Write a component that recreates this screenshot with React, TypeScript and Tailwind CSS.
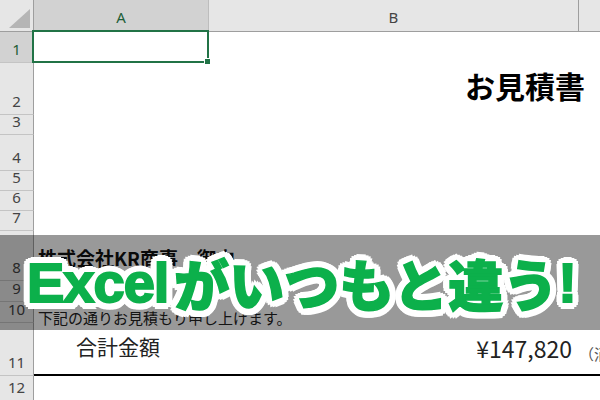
import React from "react";

const rows = [
  { n: 1, h: "h-[31px]" },
  { n: 2, h: "h-[52px]" },
  { n: 3, h: "h-[20px]" },
  { n: 4, h: "h-[36px]" },
  { n: 5, h: "h-[20px]" },
  { n: 6, h: "h-[20px]" },
  { n: 7, h: "h-[20px]" },
  { n: 8, h: "h-[50px]" },
  { n: 9, h: "h-[21px]" },
  { n: 10, h: "h-[21px]" },
  { n: 11, h: "h-[53px]" },
  { n: 12, h: "h-[25px]" },
];

function RowContent({ n }: { n: number }) {
  if (n === 2) {
    return (
      <div className="flex-1 pl-[431px] pt-[7px]">
        <span className="text-[30px] font-bold leading-none text-black whitespace-nowrap">お見積書</span>
      </div>
    );
  }
  if (n === 8) {
    return (
      <div className="flex-1 pl-[4px] pt-[16px]">
        <span className="text-[19px] font-bold leading-none text-[#111] whitespace-nowrap">株式会社KR商事　御中</span>
      </div>
    );
  }
  if (n === 10) {
    return (
      <div className="flex-1 pl-[4px] pt-[3px]">
        <span className="text-[15px] leading-none text-[#222] whitespace-nowrap">下記の通りお見積もり申し上げます。</span>
      </div>
    );
  }
  if (n === 11) {
    return (
      <div className="flex flex-1 border-b-2 border-black pt-[13px]">
        <div className="w-[175px] pl-[42px]">
          <span className="text-[21px] leading-none text-[#222] whitespace-nowrap">合計金額</span>
        </div>
        <div className="flex w-[370px] justify-end pr-[7px] pt-[1px]">
          <span className="text-[23px] leading-none text-[#222] whitespace-nowrap">¥147,820</span>
        </div>
        <div className="flex-1 pt-[5px]">
          <span className="text-[15px] leading-none text-[#555] whitespace-nowrap">（消費税込）</span>
        </div>
      </div>
    );
  }
  return <div className="flex-1" />;
}

export default function App() {
  return (
    <div className="relative h-[400px] w-[600px] overflow-hidden bg-white font-['Noto_Sans_CJK_JP','Noto_Sans',sans-serif]">
      {/* column headers */}
      <div className="flex h-[32px] border-b border-[#9e9e9e] bg-[#e6e6e6] font-['Noto_Sans',sans-serif] text-[15px] text-[#444]">
        <div className="relative w-[34px] border-r border-[#9e9e9e]">
          <svg className="absolute left-[9px] top-[9px]" width="21" height="19" viewBox="0 0 21 19">
            <polygon points="21,0 21,19 0,19" fill="#b5b5b5" />
          </svg>
        </div>
        <div className="flex w-[175px] items-end justify-center border-r border-[#bdbdbd] bg-[#d2d2d2] pb-[6px] leading-none text-[#1e5e38]">
          A
        </div>
        <div className="flex w-[370px] items-end justify-center border-r border-[#9e9e9e] pb-[6px] leading-none">
          B
        </div>
        <div className="flex-1" />
      </div>

      {/* rows */}
      {rows.map((r) => (
        <div key={r.n} className={`flex ${r.h}`}>
          <div
            className={`flex w-[34px] shrink-0 items-end justify-center border-b border-r border-b-[#c4c4c4] border-r-[#9e9e9e] pb-[5px] font-['Noto_Sans',sans-serif] text-[15px] leading-none overflow-hidden ${
              r.n === 1 ? "bg-[#d2d2d2] text-[#1e5e38]" : "bg-[#e6e6e6] text-[#444]"
            }`}
          >
            {r.n}
          </div>
          <RowContent n={r.n} />
        </div>
      ))}

      {/* selection box on A1 */}
      <div className="absolute left-[32px] top-[30px] h-[33px] w-[177px] border-2 border-[#217346]">
        <div className="absolute -bottom-[4px] -right-[4px] h-[7px] w-[7px] border border-white bg-[#217346]" />
      </div>

      {/* title overlay */}
      <div className="absolute left-0 top-[235px] flex h-[95px] w-full items-center pl-[27px] bg-black/40">
        <span className="flex items-center whitespace-nowrap font-['Noto_Sans_CJK_JP',sans-serif] text-[55px] font-black leading-none text-[#0cb04b] [text-shadow:7px_0_0_#fff,6.5px_2.7px_0_#fff,5px_5px_0_#fff,2.7px_6.5px_0_#fff,0_7px_0_#fff,-2.7px_6.5px_0_#fff,-5px_5px_0_#fff,-6.5px_2.7px_0_#fff,-7px_0_0_#fff,-6.5px_-2.7px_0_#fff,-5px_-5px_0_#fff,-2.7px_-6.5px_0_#fff,0_-7px_0_#fff,2.7px_-6.5px_0_#fff,5px_-5px_0_#fff,6.5px_-2.7px_0_#fff,3.5px_0_0_#fff,2.5px_2.5px_0_#fff,0_3.5px_0_#fff,-2.5px_2.5px_0_#fff,-3.5px_0_0_#fff,-2.5px_-2.5px_0_#fff,0_-3.5px_0_#fff,2.5px_-2.5px_0_#fff]">
          <span className="font-['Liberation_Sans',sans-serif] text-[56px] font-bold tracking-[-1px] pr-[6px] [-webkit-text-stroke:2px_#0cb04b]">Excel</span>
          <span className="[-webkit-text-stroke:1.5px_#0cb04b]">がいつもと違う</span>
          <span className="font-['Liberation_Sans',sans-serif] text-[56px] font-bold [-webkit-text-stroke:2px_#0cb04b]">!</span>
        </span>
      </div>
    </div>
  );
}
